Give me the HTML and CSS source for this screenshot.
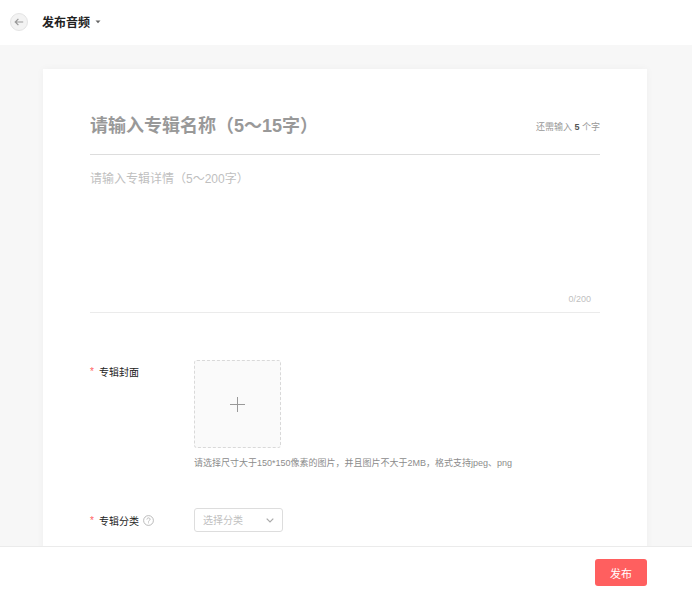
FILE: index.html
```
<!DOCTYPE html>
<html lang="zh-CN">
<head>
<meta charset="utf-8">
<meta name="viewport" content="width=device-width, initial-scale=1">
<title>发布音频</title>
<link rel="stylesheet" href="styles.css">
</head>
<body>
<header class="topbar">
  <button class="back" type="button" aria-label="返回">
    <svg width="10" height="8" viewBox="0 0 10 8" fill="none" stroke="currentColor" stroke-width="1.2"><path d="M9.2 4H1.2M4.4 .8L1.2 4l3.2 3.2"/></svg>
  </button>
  <button class="page-type" type="button">发布音频
    <svg width="6" height="4" viewBox="0 0 6 4" fill="currentColor"><path d="M.5.5h5L3 3.3z"/></svg>
  </button>
</header>
<main class="content">
  <form class="card" id="album">
    <div class="title-row">
      <input class="title-input" type="text" aria-label="专辑名称" placeholder="请输入专辑名称（5～15字）">
      <span class="remaining">还需输入 <b>5</b> 个字</span>
    </div>
    <div class="detail">
      <textarea class="detail-input" aria-label="专辑详情" placeholder="请输入专辑详情（5～200字）"></textarea>
      <span class="counter">0/200</span>
    </div>
    <div class="field cover">
      <label class="label" for="cover"><span class="star">*</span>专辑封面</label>
      <div>
        <button class="upload" id="cover" type="button" aria-label="上传专辑封面">
          <svg width="15" height="15" viewBox="0 0 15 15" stroke="currentColor"><path d="M7.5 0v15M0 7.5h15"/></svg>
        </button>
        <p class="hint">请选择尺寸大于150*150像素的图片，并且图片不大于2MB，格式支持jpeg、png</p>
      </div>
    </div>
    <div class="field category">
      <label class="label" for="category"><span class="star">*</span>专辑分类
        <svg class="help" width="11" height="11" viewBox="0 0 11 11" fill="none" stroke="currentColor" stroke-width=".8"><circle cx="5.5" cy="5.5" r="4.9"/><path d="M3.9 4.5c0-2.1 3.2-2.1 3.2-.1 0 1-1.6 1.1-1.6 2.2M5.5 7.4v.9"/></svg>
      </label>
      <div class="select-box">
        <select class="select" id="category"><option>选择分类</option></select>
        <svg class="chevron" width="8" height="5" viewBox="0 0 8 5" fill="none" stroke="currentColor" stroke-width="1.2"><path d="M.7.6L4 4 7.3.6"/></svg>
      </div>
    </div>
  </form>
</main>
<footer class="actions">
  <button class="publish" type="submit" form="album">发布</button>
</footer>
</body>
</html>
```
FILE: styles.css
```
* {
  box-sizing: border-box;
}

body {
  margin: 0;
  height: 100vh;
  display: flex;
  flex-direction: column;
  overflow: hidden;
  background: #f7f7f7;
  color: #222;
  font-family: "Liberation Sans", "Noto Sans CJK SC", sans-serif;
  font-size: 10px;
}

button,
input,
textarea,
select {
  margin: 0;
  padding: 0;
  border: 0;
  background: none;
  color: inherit;
  font: inherit;
  outline: none;
}

.topbar {
  flex: none;
  display: flex;
  align-items: center;
  gap: 14px;
  height: 45px;
  padding: 0 10px 2px;
  background: #fff;
}

.back {
  display: flex;
  align-items: center;
  justify-content: center;
  width: 18px;
  height: 18px;
  border: 1px solid #e4e4e4;
  border-radius: 50%;
  background: #f3f3f3;
  color: #999;
}

.page-type {
  display: flex;
  align-items: center;
  gap: 5px;
  font-size: 12px;
  font-weight: 700;
}

.page-type svg {
  color: #666;
}

.content {
  flex: 1;
  min-height: 0;
  overflow: hidden;
  padding: 24px 45px 0 43px;
}

.card {
  min-height: 100%;
  padding: 30px 47px 28px;
  background: #fff;
  box-shadow: 0 0 8px rgba(0, 0, 0, 0.04);
}

.title-row {
  display: flex;
  align-items: center;
  height: 56px;
  border-bottom: 1px solid #ddd;
}

.title-input {
  flex: 1;
  min-width: 0;
  height: 32px;
  font-size: 18px;
  font-weight: 700;
}

.title-input::placeholder {
  color: #999;
}

.remaining {
  color: #999;
  font-size: 9px;
}

.remaining b {
  color: #555;
}

.detail {
  display: flex;
  flex-direction: column;
  height: 158px;
  padding: 15px 0 6px;
  border-bottom: 1px solid #ebebeb;
}

.detail-input {
  flex: 1;
  resize: none;
  font-size: 12px;
  line-height: 18px;
}

.detail-input::placeholder {
  color: #bfbfbf;
}

.counter {
  padding-right: 9px;
  color: #bfbfbf;
  font-size: 9px;
  line-height: 14px;
  text-align: right;
}

.field {
  display: grid;
  grid-template-columns: 104px 1fr;
}

.cover {
  margin-top: 47px;
}

.category {
  margin-top: 38px;
}

.label {
  display: flex;
  align-items: center;
  height: 24px;
}

.cover .label {
  height: 22px;
}

.star {
  width: 9px;
  color: #ff5f5f;
}

.help {
  margin-left: 4px;
  color: #aaa;
}

.upload {
  display: flex;
  align-items: center;
  justify-content: center;
  width: 87px;
  height: 88px;
  border: 1px dashed #d9d9d9;
  border-radius: 3px;
  background: #fafafa;
  color: #999;
}

.hint {
  margin: 8px 0 0;
  color: #8c8c8c;
  font-size: 9px;
  line-height: 14px;
}

.select-box {
  display: grid;
  align-items: center;
  width: 89px;
  height: 24px;
  border: 1px solid #ddd;
  border-radius: 3px;
  color: #bfbfbf;
}

.select,
.chevron {
  grid-area: 1 / 1;
}

.select {
  appearance: none;
  width: 100%;
  height: 22px;
  padding-left: 8px;
}

.chevron {
  justify-self: end;
  margin-right: 8px;
  color: #aaa;
  pointer-events: none;
}

.actions {
  flex: none;
  display: flex;
  justify-content: flex-end;
  padding: 12px 45px 3px;
  border-top: 1px solid #ebebeb;
  background: #fff;
}

.publish {
  width: 52px;
  height: 27px;
  border-radius: 3px;
  background: #ff5f5f;
  color: #fff;
  font-size: 11px;
}
```
